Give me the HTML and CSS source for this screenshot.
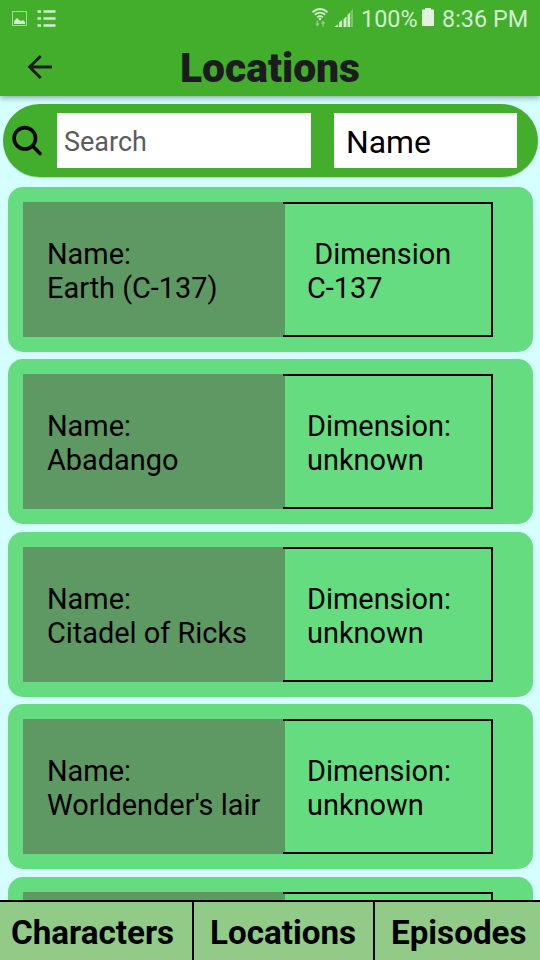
FILE: index.html
```html
<!DOCTYPE html>
<html lang="en">
<head>
<meta charset="utf-8">
<title>Locations</title>
<link rel="stylesheet" href="styles.css">
</head>
<body>
<div class="app">
  <header class="top">
    <div class="status">
      <svg class="st-left" width="60" height="36" viewBox="0 0 60 36">
        <rect x="12.5" y="11.5" width="14" height="14" fill="none" stroke="#a5d99a"/>
        <path d="M14 24v-3l2-2 1-1 2 2 2 1 2-1 2 2v2z" fill="#d3eecf"/>
        <path d="M37.500 11.500h3.500M37.500 18.500h3.500M37.500 25.500h3.500M43.500 11.500h12M43.500 18.500h12M43.500 25.500h12" stroke="#d3eecf" stroke-width="2.600"/>
      </svg>
      <svg class="st-signal" width="48" height="36" viewBox="0 0 48 36">
        <g fill="none" stroke="#d3eecf" stroke-width="1.800">
          <path d="M4.500 12.200Q12 5.800 19.500 12.200M6.800 14.800Q12 10.400 17.200 14.800M9.200 17.200Q12 15 14.800 17.200"/>
        </g>
        <circle cx="12" cy="19" r="1.300" fill="#d3eecf"/>
        <path d="M8.700 20.500h1.400v3h1.700l-2.400 2.900-2.400-2.900h1.700zM14.300 26.400h1.400v-3h1.700L15 20.500l-2.400 2.900h1.700z" fill="#8ed082"/>
        <path d="M26 27l4-2.500V27zM31 27v-4.500l3-2.500v7zM35.500 27v-8l3-2.500V27z" fill="#d3eecf"/>
        <path d="M39.500 27V15l2.500-2.500V27z" fill="#d3eecf"/>
        <path d="M42.500 27V11.500L45 9v18z" fill="#7ac76d"/>
      </svg>
      <span class="pct">100%</span>
      <svg class="st-batt" width="12" height="36" viewBox="0 0 12 36"><path d="M0 9.500h3V8h6v1.500h3V26H0z" fill="#e2f2df"/></svg>
      <span class="clock">8:36 PM</span>
    </div>
    <div class="titlebar">
      <svg class="back" width="26" height="26" viewBox="0 0 26 26"><path d="M25 13H3M13.700 2 2.700 13l11 11" fill="none" stroke="#1c1c1e" stroke-width="2.900"/></svg>
      <h1>Locations</h1>
    </div>
  </header>
  <div class="search">
    <svg class="lens" width="32" height="32" viewBox="0 0 32 32"><g fill="none" stroke="#000" stroke-width="3.600" stroke-linecap="round"><circle cx="13.800" cy="13.300" r="10.700"/><path d="M21.800 21.300 29 28.500"/></g></svg>
    <div class="field">Search</div>
    <div class="select">Name</div>
  </div>
  <main class="list">
    <article class="card"><div class="name">Name:<br>Earth (C-137)</div><div class="dim">&nbsp;Dimension<br>C-137</div></article>
    <article class="card"><div class="name">Name:<br>Abadango</div><div class="dim">Dimension:<br>unknown</div></article>
    <article class="card"><div class="name">Name:<br>Citadel of Ricks</div><div class="dim">Dimension:<br>unknown</div></article>
    <article class="card"><div class="name">Name:<br>Worldender's lair</div><div class="dim">Dimension:<br>unknown</div></article>
    <article class="card"><div class="name"></div><div class="dim"></div></article>
  </main>
  <nav class="tabs">
    <div class="tab">Characters</div>
    <div class="tab">Locations</div>
    <div class="tab">Episodes</div>
  </nav>
</div>
</body>
</html>
```
FILE: styles.css
```css
* { box-sizing: border-box; }
body { margin: 0; font-family: Roboto, sans-serif; color: #000; }
.app { width: 540px; height: 960px; display: flex; flex-direction: column; overflow: hidden; background: #d5ffff; }
.top { height: 96px; flex: none; background: #42ae2c; box-shadow: 0 2px 6px rgba(0, 0, 0, .35); }
.status { height: 36px; display: flex; color: #d3eecf; font-size: 23.400px; line-height: 38px; white-space: nowrap; }
.st-signal { margin-left: 248px; }
.pct { width: 61px; margin-left: 5px; }
.clock { margin-left: 8px; }
.titlebar { height: 60px; display: flex; align-items: center; color: #1c1c1e; }
.back { margin: 2px 0 0 27px; }
h1 { margin: 3px 0 0 127px; font-size: 40.800px; line-height: 48px; font-weight: 900; }
.search { flex: none; height: 73px; margin: 8px 2px 0 3px; padding: 9px 21px 9px 8px; border-radius: 37px; background: #42ae2c; display: flex; box-shadow: 0 1px 1px rgba(0, 0, 0, .18); }
.lens { margin-top: 12px; }
.field { width: 254px; height: 55px; margin-left: 14px; padding-left: 7px; background: #fff; color: #5c5c5c; font-size: 27px; line-height: 58px; }
.select { width: 183px; height: 55px; margin-left: 23px; padding-left: 12px; background: #fff; font-size: 31.900px; line-height: 59px; }
.list { flex: 1; min-height: 0; overflow: hidden; padding: 9.800px 7px 0 8px; }
.card { height: 165px; margin-bottom: 7.500px; padding: 15px; border-radius: 15px; background: #65dc80; display: flex; font-size: 28.900px; line-height: 34px; white-space: nowrap; }
.name { width: 262px; height: 135px; padding: 35px 0 0 24px; background: #5e9863; }
.dim { width: 210px; height: 135px; margin-left: -2px; padding: 33px 0 0 24px; border: 2px solid #000; border-left: 0; }
.tabs { flex: none; height: 60px; border-top: 2px solid #000; background: #92ca87; display: flex; font-size: 33.200px; font-weight: 700; line-height: 61px; white-space: nowrap; }
.tab { width: 194px; padding-left: 11px; border-right: 2px solid #000; }
.tab:nth-child(2) { width: 181px; padding-left: 16px; }
.tab:nth-child(3) { width: 165px; padding-left: 16px; border-right: 0; }
```
